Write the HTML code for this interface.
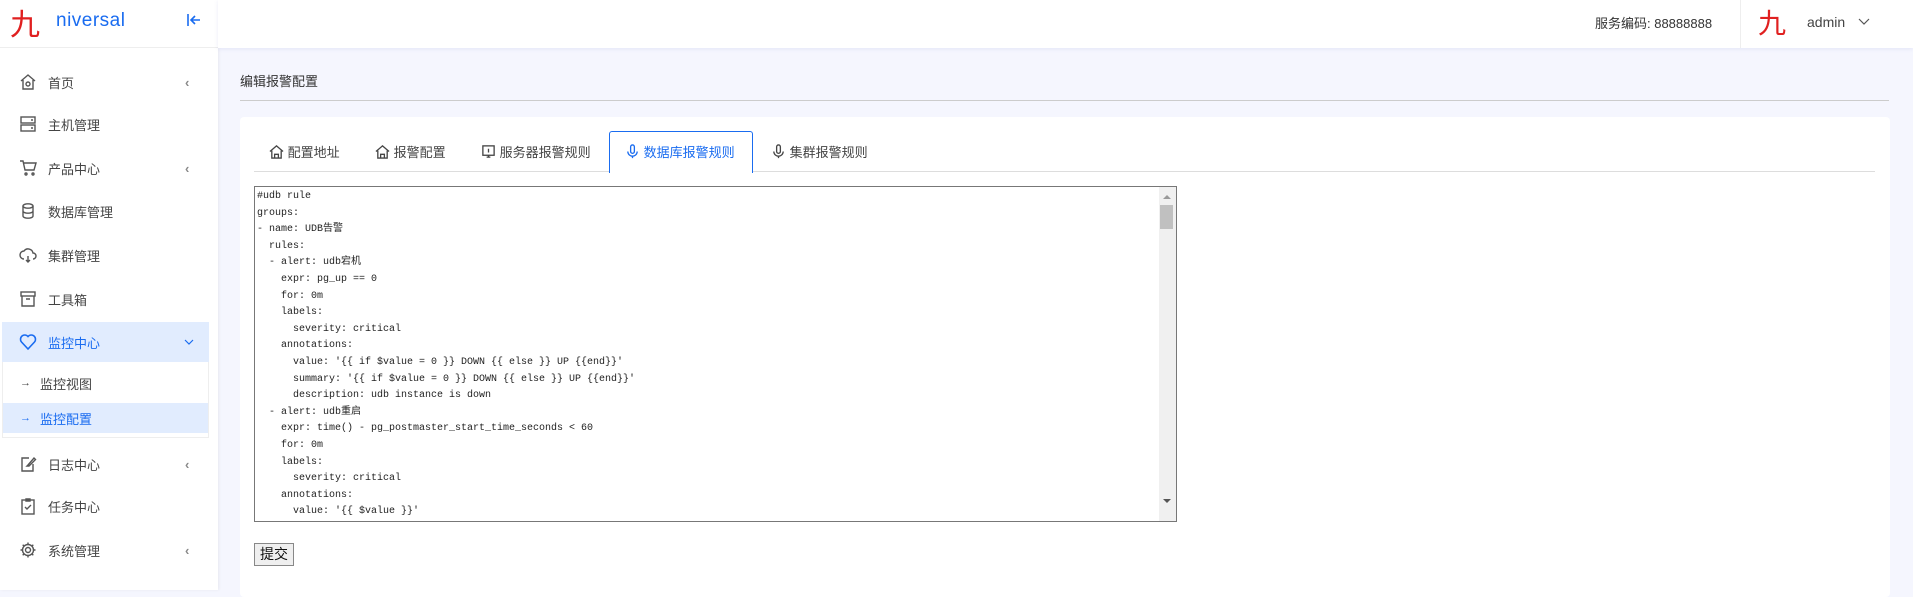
<!DOCTYPE html>
<html><head><meta charset="utf-8"><style>
*{margin:0;padding:0;box-sizing:border-box}
body{width:1913px;height:590px;overflow:hidden;background:#f5f6fe;font-family:"Liberation Sans","Noto Sans CJK SC",sans-serif;color:#333;position:relative}
.abs{position:absolute}
#side{left:0;top:0;width:218px;height:590px;background:#fff;box-shadow:1px 0 3px rgba(0,0,0,.06)}
#hdr{left:218px;top:0;width:1695px;height:48px;background:#fff;box-shadow:0 1px 4px rgba(100,110,200,.12)}
.mi{position:absolute;left:0;width:210px;height:40px;font-size:13px;color:#444;display:flex;align-items:center}
.mi svg{position:absolute;left:19px}
.mi span{position:absolute;left:48px}
.mi .ar{position:absolute;left:185px;font-size:13px;color:#888}
.tab{position:absolute;top:131px;height:41px;font-size:13px;color:#444;display:flex;align-items:center}
pre{font-family:"Liberation Mono","Noto Sans CJK SC",monospace;font-size:10px;line-height:16.6px;color:#222}
</style></head><body>
<div id="side" class="abs">
  <div class="abs" style="left:10px;top:4px;font-size:30px;color:#e02020;font-family:'Noto Sans CJK SC',sans-serif;line-height:36px">九</div>
  <div class="abs" style="left:56px;top:10px;font-size:19px;color:#1a6cf0;letter-spacing:.5px">niversal</div>
  <svg class="abs" style="left:186px;top:12px" width="16" height="16" viewBox="0 0 16 16" fill="none" stroke="#1a6cf0" stroke-width="1.6"><path d="M2 2v12M14 8H5M9 4L5 8l4 4"/></svg>
  <div class="abs" style="left:0;top:47px;width:218px;height:1px;background:#eee"></div>

  <div class="mi" style="top:62px"><svg width="18" height="18" viewBox="0 0 18 18" fill="none" stroke="#555" stroke-width="1.4"><path d="M2 8L9 2l7 6M4 7v9h10V7"/><circle cx="9" cy="11" r="2"/></svg><span>首页</span><b class="ar">‹</b></div>
  <div class="mi" style="top:104px"><svg width="18" height="18" viewBox="0 0 18 18" fill="none" stroke="#555" stroke-width="1.4"><rect x="2" y="2" width="14" height="6"/><rect x="2" y="10" width="14" height="6"/><path d="M12 5h2M12 13h2"/></svg><span>主机管理</span></div>
  <div class="mi" style="top:148px"><svg width="18" height="18" viewBox="0 0 18 18" fill="none" stroke="#555" stroke-width="1.4"><path d="M1 2h3l2 9h9l2-7H5"/><circle cx="7" cy="15" r="1"/><circle cx="14" cy="15" r="1"/></svg><span>产品中心</span><b class="ar">‹</b></div>
  <div class="mi" style="top:191px"><svg width="18" height="18" viewBox="0 0 18 18" fill="none" stroke="#555" stroke-width="1.4"><ellipse cx="9" cy="4" rx="5" ry="2.2"/><path d="M4 4v10c0 1.2 2.2 2.2 5 2.2s5-1 5-2.2V4M4 9c0 1.2 2.2 2.2 5 2.2s5-1 5-2.2"/></svg><span>数据库管理</span></div>
  <div class="mi" style="top:235px"><svg width="18" height="18" viewBox="0 0 18 18" fill="none" stroke="#555" stroke-width="1.4"><path d="M5 13a4 4 0 0 1 0-8 5 5 0 0 1 9 2 3 3 0 0 1 0 6M9 10v6M7 14l2 2 2-2"/></svg><span>集群管理</span></div>
  <div class="mi" style="top:279px"><svg width="18" height="18" viewBox="0 0 18 18" fill="none" stroke="#555" stroke-width="1.4"><rect x="2" y="2" width="14" height="4"/><path d="M3 6v10h12V6M7 9h4"/></svg><span>工具箱</span></div>
  <div class="abs" style="left:2px;top:322px;width:207px;height:40px;background:#e1ecfe"></div>
  <div class="mi" style="top:322px;color:#1a6cf0"><svg width="18" height="18" viewBox="0 0 18 18" fill="none" stroke="#1a6cf0" stroke-width="1.6"><path d="M9 16L2.5 9A4 4 0 0 1 9 3.5 4 4 0 0 1 15.5 9z"/></svg><span>监控中心</span><svg style="left:183px" width="12" height="12" viewBox="0 0 12 12" fill="none" stroke="#1a6cf0" stroke-width="1.2"><path d="M2 4l4 4 4-4"/></svg></div>
  <div class="abs" style="left:2px;top:362px;width:207px;height:76px;border:1px solid #eee;border-top:none"></div>
  <div class="mi" style="top:363px"><span style="left:20px;font-size:11px">→</span><span style="left:40px">监控视图</span></div>
  <div class="abs" style="left:3px;top:403px;width:205px;height:30px;background:#e1ecfe"></div>
  <div class="mi" style="top:398px;color:#1a6cf0"><span style="left:20px;font-size:11px">→</span><span style="left:40px">监控配置</span></div>
  <div class="mi" style="top:444px"><svg width="18" height="18" viewBox="0 0 18 18" fill="none" stroke="#555" stroke-width="1.4"><path d="M14 9v7H3V3h7M9 10l6-7 1.5 1.5L10 11H8z"/></svg><span>日志中心</span><b class="ar">‹</b></div>
  <div class="mi" style="top:486px"><svg width="18" height="18" viewBox="0 0 18 18" fill="none" stroke="#555" stroke-width="1.4"><rect x="3" y="3" width="12" height="14"/><path d="M7 2h4v2H7zM6 10l2 2 4-4"/></svg><span>任务中心</span></div>
  <div class="mi" style="top:530px"><svg width="18" height="18" viewBox="0 0 18 18" fill="none" stroke="#555" stroke-width="1.4"><circle cx="9" cy="9" r="2.5"/><path d="M9 1.5v2.5M9 14v2.5M1.5 9H4M14 9h2.5M3.7 3.7l1.8 1.8M12.5 12.5l1.8 1.8M3.7 14.3l1.8-1.8M12.5 5.5l1.8-1.8"/><circle cx="9" cy="9" r="5.5"/></svg><span>系统管理</span><b class="ar">‹</b></div>
</div>

<div id="hdr" class="abs">
  <div class="abs" style="left:1377px;top:13px;font-size:13px;color:#333">服务编码: 88888888</div>
  <div class="abs" style="left:1522px;top:0;width:1px;height:48px;background:#eee"></div>
  <div class="abs" style="left:1540px;top:4px;font-size:28px;color:#e02020;font-family:'Noto Sans CJK SC',sans-serif;line-height:36px">九</div>
  <div class="abs" style="left:1589px;top:14px;font-size:14px;color:#444">admin</div>
  <svg class="abs" style="left:1640px;top:17px" width="12" height="10" viewBox="0 0 12 10" fill="none" stroke="#555" stroke-width="1.2"><path d="M1 2l5 5 5-5"/></svg>
</div>

<div class="abs" style="left:240px;top:71px;font-size:13px;color:#333">编辑报警配置</div>
<div class="abs" style="left:240px;top:100px;width:1649px;height:1px;background:#ccc"></div>
<div class="abs" style="left:240px;top:117px;width:1650px;height:480px;background:#fff;border-radius:4px"></div>
<div class="abs" style="left:254px;top:171px;width:1621px;height:1px;background:#ddd"></div>
<div class="abs" style="left:609px;top:131px;width:144px;height:42px;border:1px solid #1a6cf0;border-bottom:none;border-radius:3px 3px 0 0;background:#fff"></div>
<div class="tab" style="left:269px"><svg width="15" height="15" viewBox="0 0 16 16" fill="none" stroke="#444" stroke-width="1.4"><path d="M1 8l7-6 7 6M3 7v8h10V7M6 15v-4h4v4"/></svg>&nbsp;配置地址</div>
<div class="tab" style="left:375px"><svg width="15" height="15" viewBox="0 0 16 16" fill="none" stroke="#444" stroke-width="1.4"><path d="M1 8l7-6 7 6M3 7v8h10V7M6 15v-4h4v4"/></svg>&nbsp;报警配置</div>
<div class="tab" style="left:481px"><svg width="15" height="15" viewBox="0 0 16 16" fill="none" stroke="#444" stroke-width="1.4"><rect x="2" y="2" width="12" height="10"/><path d="M8 5v4M6 14h4M8 12v2"/></svg>&nbsp;服务器报警规则</div>
<div class="tab" style="left:625px;color:#1a6cf0"><svg width="15" height="15" viewBox="0 0 16 16" fill="none" stroke="#1a6cf0" stroke-width="1.4"><rect x="6" y="1" width="4" height="9" rx="2"/><path d="M3 8a5 5 0 0 0 10 0M8 13v2"/></svg>&nbsp;数据库报警规则</div>
<div class="tab" style="left:771px"><svg width="15" height="15" viewBox="0 0 16 16" fill="none" stroke="#444" stroke-width="1.4"><rect x="6" y="1" width="4" height="9" rx="2"/><path d="M3 8a5 5 0 0 0 10 0M8 13v2"/></svg>&nbsp;集群报警规则</div>

<div class="abs" style="left:254px;top:186px;width:923px;height:336px;border:1px solid #777;background:#fff;overflow:hidden">
<pre style="position:absolute;left:2px;top:2px">#udb rule
groups:
- name: UDB告警
  rules:
  - alert: udb宕机
    expr: pg_up == 0
    for: 0m
    labels:
      severity: critical
    annotations:
      value: '{{ if $value = 0 }} DOWN {{ else }} UP {{end}}'
      summary: '{{ if $value = 0 }} DOWN {{ else }} UP {{end}}'
      description: udb instance is down
  - alert: udb重启
    expr: time() - pg_postmaster_start_time_seconds &lt; 60
    for: 0m
    labels:
      severity: critical
    annotations:
      value: '{{ $value }}'</pre>
<div class="abs" style="right:0;top:0;width:17px;height:334px;background:#f0f0f0"></div>
<div class="abs" style="right:3px;top:18px;width:13px;height:24px;background:#c0c0c0"></div>
<div class="abs" style="right:5px;top:8px;width:0;height:0;border-left:4px solid transparent;border-right:4px solid transparent;border-bottom:4px solid #999"></div>
<div class="abs" style="right:5px;bottom:18px;width:0;height:0;border-left:4px solid transparent;border-right:4px solid transparent;border-top:4px solid #555"></div>
</div>
<div class="abs" style="left:254px;top:543px;width:40px;height:23px;border:1px solid #888;background:#efefef;font-size:14px;text-align:center;line-height:21px;color:#111">提交</div>
</body></html>
